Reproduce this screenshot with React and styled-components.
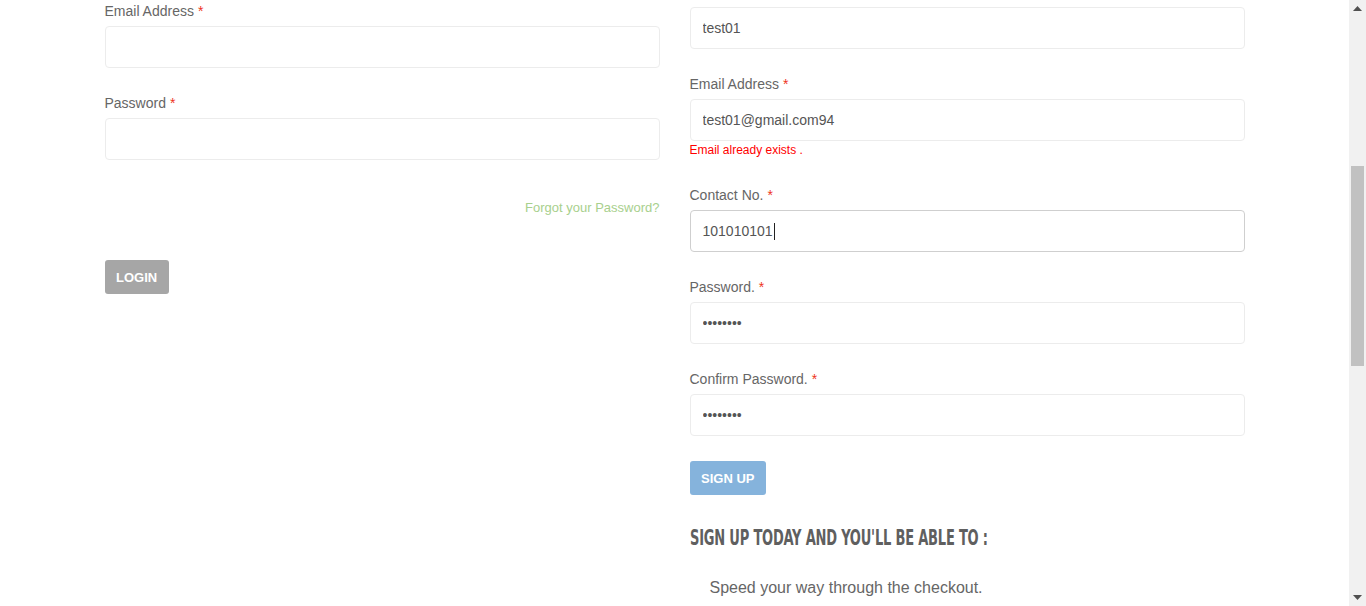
import React from "react";
import styled, { createGlobalStyle } from "styled-components";

const GlobalStyle = createGlobalStyle`
    html, body {
        margin: 0;
        padding: 0;
        background: #fff;
        overflow: hidden;
    }
    body {
        font-family: "Liberation Sans", Arial, sans-serif;
        font-size: 14px;
        color: #555;
    }
`;

// Page frame: content plus a fake browser scrollbar
const Page = styled.div`
    display: flex;
    width: 1366px;
    height: 606px;
    overflow: hidden;
`;

const Main = styled.div`
    flex: 1;
    background: #fff;
`;

const Container = styled.div`
    width: 1170px;
    margin: 0 auto;
    padding: 0 15px;
    box-sizing: border-box;
    display: grid;
    grid-template-columns: 1fr 1fr;
    column-gap: 30px;
    align-items: start;
`;

const Column = styled.div`
    padding-top: ${(p) => p.$top || 0}px;
`;

const FormGroup = styled.div`
    margin-bottom: 25px;
`;

const Label = styled.label`
    display: block;
    font-size: 14px;
    line-height: 20px;
    color: #666;
    margin-bottom: 5px;
`;

const Required = styled.span`
    color: #e32;
    margin-left: 4px;
`;

const Input = styled.input`
    display: block;
    width: 100%;
    height: 42px;
    box-sizing: border-box;
    padding: 0 12px;
    border: 1px solid ${(p) => (p.$focused ? "#cfcfcf" : "#ececec")};
    border-radius: 4px;
    font-family: "Liberation Sans", Arial, sans-serif;
    font-size: 14px;
    color: #555;
    background: #fff;
    outline: none;
`;

const InputBox = styled.div`
    display: flex;
    align-items: center;
    width: 100%;
    height: 42px;
    box-sizing: border-box;
    padding: 0 12px;
    border: 1px solid #cfcfcf;
    border-radius: 4px;
    font-size: 14px;
    color: #555;
    background: #fff;
`;

const Caret = styled.span`
    display: inline-block;
    width: 1px;
    height: 17px;
    background: #222;
    margin-left: 1px;
`;

const ErrorText = styled.div`
    margin-top: 1px;
    font-size: 12px;
    line-height: 17px;
    height: 17px;
    color: #f00;
`;

const ErrorGroup = styled(FormGroup)`
    margin-bottom: 26px;
`;

const LinkRow = styled.div`
    display: flex;
    justify-content: flex-end;
    padding-top: 15px;
    height: 60px;
`;

const ForgotLink = styled.a`
    font-size: 13px;
    line-height: 16px;
    color: #a8d08d;
    text-decoration: none;
`;

const Button = styled.button`
    height: 34px;
    padding: 0 11.5px;
    border: none;
    border-radius: 3px;
    background: ${(p) => p.$bg};
    color: #fff;
    font-family: "Liberation Sans", Arial, sans-serif;
    font-size: 13px;
    font-weight: bold;
    text-transform: uppercase;
    cursor: pointer;
`;

const Heading = styled.h3`
    margin: 28px 0 0;
    font-family: "DejaVu Sans Condensed", "DejaVu Sans", sans-serif;
    font-weight: bold;
    font-size: 21px;
    line-height: 30px;
    letter-spacing: -0.3px;
    color: #5f5f5f;
    transform: scaleX(0.69);
    transform-origin: left center;
    white-space: nowrap;
`;

const BenefitList = styled.ul`
    list-style: none;
    margin: 24px 0 0;
    padding: 0 0 0 20px;
`;

const Benefit = styled.li`
    font-size: 16px;
    line-height: 22px;
    color: #666;
`;

// Fake scrollbar drawn at the right edge
const ScrollTrack = styled.div`
    width: 17px;
    background: #f1f1f1;
    display: flex;
    flex-direction: column;
    align-items: center;
`;

const Arrow = styled.div`
    height: 17px;
    display: flex;
    align-items: center;
    justify-content: center;
`;

const Thumb = styled.div`
    width: 13px;
    height: 200px;
    margin-top: 149px;
    background: #c1c1c1;
`;

const Spacer = styled.div`
    flex: 1;
`;

const Field = ({ label, value, type = "text" }) => (
    <FormGroup>
        <Label>
            {label}
            <Required>*</Required>
        </Label>
        <Input type={type} defaultValue={value} readOnly />
    </FormGroup>
);

export default function App() {
    return (
        <>
            <GlobalStyle />
            <Page>
                <Main>
                    <Container>
                        <Column $top={1}>
                            <Field label="Email Address" value="" />
                            <Field label="Password" value="" type="password" />
                            <LinkRow>
                                <ForgotLink href="#">Forgot your Password?</ForgotLink>
                            </LinkRow>
                            <Button $bg="#a6a6a6">Login</Button>
                        </Column>

                        <Column $top={7}>
                            <FormGroup>
                                <Input defaultValue="test01" readOnly />
                            </FormGroup>
                            <ErrorGroup>
                                <Label>
                                    Email Address<Required>*</Required>
                                </Label>
                                <Input defaultValue="test01@gmail.com94" readOnly />
                                <ErrorText>Email already exists .</ErrorText>
                            </ErrorGroup>
                            <FormGroup>
                                <Label>
                                    Contact No.<Required>*</Required>
                                </Label>
                                <InputBox>
                                    101010101
                                    <Caret />
                                </InputBox>
                            </FormGroup>
                            <Field label="Password." value="mypasswd" type="password" />
                            <Field label="Confirm Password." value="mypasswd" type="password" />
                            <Button $bg="#85b3dc">Sign Up</Button>
                            <Heading>SIGN UP TODAY AND YOU'LL BE ABLE TO :</Heading>
                            <BenefitList>
                                <Benefit>Speed your way through the checkout.</Benefit>
                            </BenefitList>
                        </Column>
                    </Container>
                </Main>
                <ScrollTrack>
                    <Arrow>
                        <svg width="9" height="5" viewBox="0 0 9 5">
                            <path d="M0 5 L4.5 0 L9 5 Z" fill="#505050" />
                        </svg>
                    </Arrow>
                    <Thumb />
                    <Spacer />
                    <Arrow>
                        <svg width="9" height="5" viewBox="0 0 9 5">
                            <path d="M0 0 L4.5 5 L9 0 Z" fill="#505050" />
                        </svg>
                    </Arrow>
                </ScrollTrack>
            </Page>
        </>
    );
}
